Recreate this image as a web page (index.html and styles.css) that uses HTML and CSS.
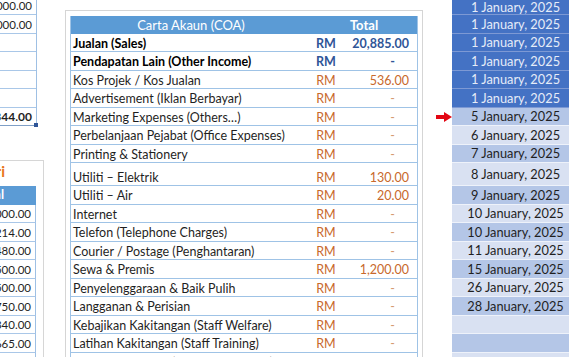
FILE: index.html
```html
<!DOCTYPE html>
<html lang="ms">
<head>
<meta charset="utf-8">
<title>Carta Akaun</title>
<link rel="stylesheet" href="styles.css">
</head>
<body>
<div class="sheet">
  <div class="left">
    <div class="left-inner">
      <div class="ltable">
        <div class="lrow first">15,000.00</div>
        <div class="lrow">10,000.00</div>
        <div class="lrow"></div>
        <div class="lrow"></div>
        <div class="lrow"></div>
        <div class="lrow"></div>
        <div class="lrow sum">20,344.00<span class="handle"></span></div>
      </div>
      <div class="lcard">
        <div class="ltitle"><span>Perbelanjaan Mengikut Kategori</span></div>
        <div class="lhead">Total</div>
        <div class="lrow">1,000.00</div>
        <div class="lrow">1,214.00</div>
        <div class="lrow">2,480.00</div>
        <div class="lrow">1,500.00</div>
        <div class="lrow">1,500.00</div>
        <div class="lrow">3,750.00</div>
        <div class="lrow">2,340.00</div>
        <div class="lrow">6,665.00</div>
        <div class="lrow"></div>
      </div>
    </div>
  </div>

  <div class="card">
    <div class="coa">
      <div class="head"><span>Carta Akaun (COA)</span><span class="th-total">Total</span></div>
      <div class="row main"><span class="lbl">Jualan (Sales)</span><span class="rm">RM</span><span class="val">20,885.00</span></div>
      <div class="row main"><span class="lbl">Pendapatan Lain (Other Income)</span><span class="rm">RM</span><span class="val dash">-</span></div>
      <div class="row"><span class="lbl">Kos Projek / Kos Jualan</span><span class="rm">RM</span><span class="val">536.00</span></div>
      <div class="row"><span class="lbl">Advertisement (Iklan Berbayar)</span><span class="rm">RM</span><span class="val dash">-</span></div>
      <div class="row"><span class="lbl">Marketing Expenses (Others…)</span><span class="rm">RM</span><span class="val dash">-</span></div>
      <div class="row"><span class="lbl">Perbelanjaan Pejabat (Office Expenses)</span><span class="rm">RM</span><span class="val dash">-</span></div>
      <div class="row"><span class="lbl">Printing &amp; Stationery</span><span class="rm">RM</span><span class="val dash">-</span></div>
      <div class="row tall"><span class="lbl">Utiliti – Elektrik</span><span class="rm">RM</span><span class="val">130.00</span></div>
      <div class="row"><span class="lbl">Utiliti – Air</span><span class="rm">RM</span><span class="val">20.00</span></div>
      <div class="row"><span class="lbl">Internet</span><span class="rm">RM</span><span class="val dash">-</span></div>
      <div class="row"><span class="lbl">Telefon (Telephone Charges)</span><span class="rm">RM</span><span class="val dash">-</span></div>
      <div class="row"><span class="lbl">Courier / Postage (Penghantaran)</span><span class="rm">RM</span><span class="val dash">-</span></div>
      <div class="row"><span class="lbl">Sewa &amp; Premis</span><span class="rm">RM</span><span class="val">1,200.00</span></div>
      <div class="row"><span class="lbl">Penyelenggaraan &amp; Baik Pulih</span><span class="rm">RM</span><span class="val dash">-</span></div>
      <div class="row"><span class="lbl">Langganan &amp; Perisian</span><span class="rm">RM</span><span class="val dash">-</span></div>
      <div class="row"><span class="lbl">Kebajikan Kakitangan (Staff Welfare)</span><span class="rm">RM</span><span class="val dash">-</span></div>
      <div class="row"><span class="lbl">Latihan Kakitangan (Staff Training)</span><span class="rm">RM</span><span class="val dash">-</span></div>
      <div class="row"><span class="lbl">Yuran Profesional (Professional Fees)</span><span class="rm">RM</span><span class="val dash">-</span></div>
    </div>
  </div>

  <div class="pointer">
    <svg width="16" height="10" viewBox="0 0 16 10" aria-hidden="true"><path d="M0 3h8V0l8 5-8 5V7H0z" fill="#e30613"/></svg>
  </div>

  <div class="dates">
    <div class="d dark first">1 January, 2025</div>
    <div class="d dark">1 January, 2025</div>
    <div class="d dark">1 January, 2025</div>
    <div class="d dark">1 January, 2025</div>
    <div class="d dark">1 January, 2025</div>
    <div class="d dark">1 January, 2025</div>
    <div class="d mid">5 January, 2025</div>
    <div class="d light">6 January, 2025</div>
    <div class="d mid">7 January, 2025</div>
    <div class="d light tall">8 January, 2025</div>
    <div class="d mid">9 January, 2025</div>
    <div class="d light">10 January, 2025</div>
    <div class="d mid">10 January, 2025</div>
    <div class="d light">11 January, 2025</div>
    <div class="d mid">15 January, 2025</div>
    <div class="d light">26 January, 2025</div>
    <div class="d mid">28 January, 2025</div>
    <div class="d light"></div>
    <div class="d mid"></div>
    <div class="d light"></div>
  </div>
</div>
</body>
</html>
```

FILE: styles.css
```css
* { box-sizing: border-box; }
html, body { margin: 0; padding: 0; }
body {
  background: #ffffff;
  overflow: hidden;
  font-family: Lato, "Liberation Sans", sans-serif;
  font-size: 12.5px;
  color: #1f1f1f;
}
.sheet {
  display: flex;
  align-items: flex-start;
  width: 569px;
  height: 357px;
  overflow: hidden;
}

/* left, partially scrolled-off panel */
.left { width: 44px; flex: none; overflow: hidden; font-size: 11.5px; }
.left-inner { width: 180px; margin-left: -136px; }
.ltable { width: 173px; border-right: 1px solid #9fc0e4; }
.lrow {
  position: relative;
  height: 18.5px;
  border-bottom: 1px solid #a9c7e8;
  display: flex;
  justify-content: flex-end;
  align-items: flex-end;
  padding-right: 4px;
  line-height: 16px;
  white-space: nowrap;
}
.lrow.first { height: 15px; }
.lrow.sum { font-weight: 700; font-size: 12px; border-bottom-color: #7f9fc6; }
.handle {
  position: absolute;
  right: -2px;
  bottom: -2px;
  width: 4px;
  height: 4px;
  background: #2f5597;
}
.lcard {
  margin-top: 34px;
  width: 180px;
  border-top: 1px solid #d6d6d6;
  border-right: 1px solid #d6d6d6;
}
.lcard .lrow { width: 172px; border-right: 1px solid #9fc0e4; }
.ltitle {
  display: flex;
  justify-content: flex-end;
  height: 25px;
  padding-right: 38px;
  white-space: nowrap;
  font-size: 15px;
  line-height: 20px;
  font-weight: 700;
  color: #e8731a;
}
.lhead {
  width: 172px;
  height: 18.5px;
  background: #5b9bd5;
  color: #fff;
  font-weight: 700;
  font-size: 12.5px;
  text-align: right;
  padding-right: 32px;
  line-height: 18px;
}

/* main card */
.card {
  flex: none;
  width: 358px;
  margin: 10px 0 0 21px;
  padding: 4.5px 4px 0;
  border: 1px solid #d5d5d5;
  border-bottom: none;
  background: #fff;
}
.coa { border-left: 1px solid #9fc3e6; border-right: 1px solid #9fc3e6; }
.head {
  display: grid;
  grid-template-columns: 240px 1fr;
  height: 18px;
  background: #5b9bd5;
  color: #fff;
  font-size: 13px;
  line-height: 18px;
  text-align: center;
}
.th-total { font-weight: 700; }
.row {
  display: grid;
  grid-template-columns: 240px 30px 1fr;
  height: 18.5px;
  border-bottom: 1px solid #9fc3e6;
  align-items: end;
  line-height: 15.5px;
  white-space: nowrap;
}
.row.tall { height: 23px; }
.lbl { padding-left: 2px; }
.rm { text-align: center; color: #c8692c; }
.val { text-align: right; padding-right: 8px; color: #c8692c; }
.val.dash { padding-right: 22px; color: #d59a70; }
.row.main .lbl { font-weight: 700; color: #000; }
.row.main .rm, .row.main .val { font-weight: 700; color: #2f5597; }

/* arrow */
.pointer { flex: none; width: 29px; padding: 112px 0 0 13px; }
.pointer svg { display: block; }

/* date column */
.dates { flex: none; width: 127px; font-size: 12.8px; }
.d {
  height: 18.5px;
  display: flex;
  align-items: center;
  justify-content: center;
  white-space: nowrap;
  border-bottom: 1px solid #eef2fa;
  color: #1f1f1f;
}
.d.first { height: 15px; }
.d.tall { height: 23px; }
.d.dark { background: #4472c4; color: #e6ecf8; border-bottom-color: #7d99d4; }
.d.mid { background: #b4c6e7; }
.d.light { background: #d9e1f2; }
```
